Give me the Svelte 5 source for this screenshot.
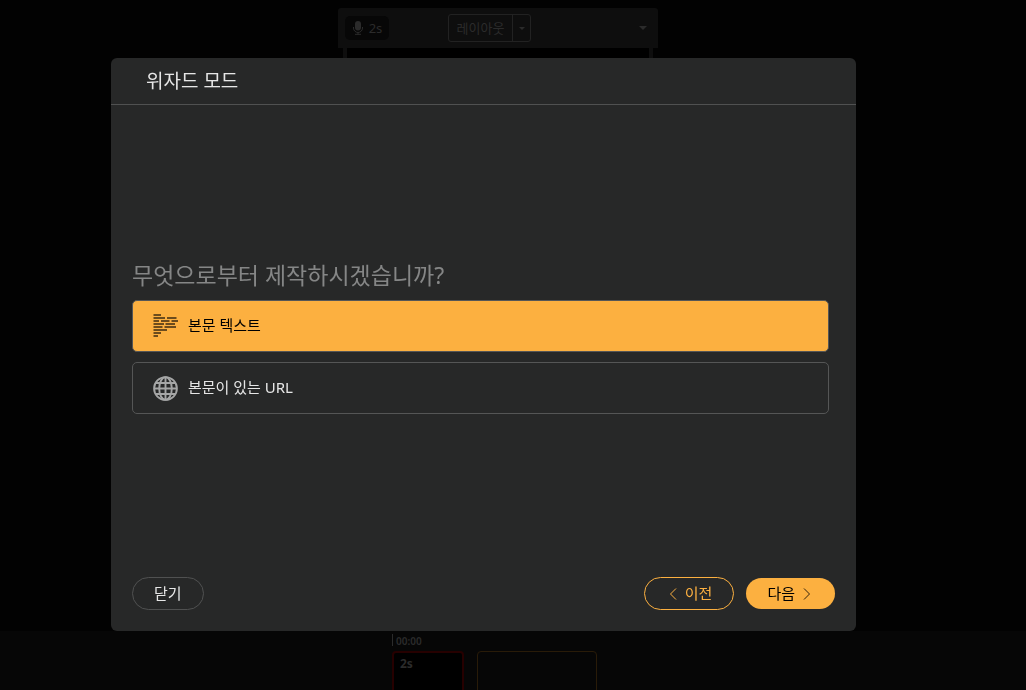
<script>
  let selected = $state('text');
</script>

<div class="page">
  <header class="toolbar">
    <button class="voice">
      <svg width="12" height="14" viewBox="0 0 12 14" aria-hidden="true">
        <rect x="3" y="0" width="6" height="9.500" rx="3" fill="currentColor" />
        <path d="M1.5 6v1a4.5 4.5 0 0 0 9 0V6M6 11.500v2M3 13.300h6" fill="none" stroke="currentColor" />
      </svg>
      <span>2s</span>
    </button>
    <div class="layout-group">
      <button class="layout">레이아웃</button>
      <button class="layout-more" aria-label="레이아웃">
        <svg width="6" height="3" viewBox="0 0 6 3" aria-hidden="true"><path d="M0 0h6L3 3z" fill="currentColor" /></svg>
      </button>
    </div>
    <button class="more" aria-label="2s">
      <svg width="8" height="4" viewBox="0 0 8 4" aria-hidden="true"><path d="M0 0h8L4 4z" fill="currentColor" /></svg>
    </button>
  </header>
  <div class="canvas"></div>
  <section class="timeline">
    <div class="time">00:00</div>
    <div class="clips">
      <div class="clip current">2s</div>
      <div class="clip next"></div>
    </div>
  </section>
</div>

<div class="overlay">
  <div class="dialog" role="dialog" aria-labelledby="title">
    <h1 id="title">위자드 모드</h1>
    <main>
      <h2>무엇으로부터 제작하시겠습니까?</h2>
      <button class="option" class:selected={selected === 'text'} onclick={() => (selected = 'text')}>
        <svg width="25" height="24" viewBox="0 0 25 24" aria-hidden="true">
          <path
            d="M.5 1h7.500M.5 4h11.500M14 4h9.500M.5 7h5.500M8 7h8.500M18.500 7h6.500M.5 10h10.500M12.500 10h9.500M.5 13h9M11.500 13h11.500M.5 16h13.500M.5 19h7.500M.5 22h4.500"
            fill="none" stroke="currentColor" stroke-width="1.300" />
        </svg>
        <span>본문 텍스트</span>
      </button>
      <button class="option" class:selected={selected === 'url'} onclick={() => (selected = 'url')}>
        <svg class="globe" width="25" height="25" viewBox="0 0 25 25" aria-hidden="true">
          <g fill="none" stroke="currentColor" stroke-width="1.900">
            <circle cx="12.500" cy="12.500" r="11.400" />
            <ellipse cx="12.500" cy="12.500" rx="6.300" ry="11.400" />
            <path d="M12.500 1v23M1 12.500h23M2.800 7h19.400M2.800 18h19.400" />
          </g>
        </svg>
        <span>본문이 있는 URL</span>
      </button>
    </main>
    <footer>
      <button class="pill close"><span>닫기</span></button>
      <button class="pill prev">
        <svg width="8" height="12" viewBox="0 0 8 12" aria-hidden="true"><path d="M7 .5 1.500 6 7 11.500" fill="none" stroke="currentColor" /></svg>
        <span>이전</span>
      </button>
      <button class="pill following">
        <span>다음</span>
        <svg width="8" height="12" viewBox="0 0 8 12" aria-hidden="true"><path d="M1 .5 6.500 6 1 11.500" fill="none" stroke="currentColor" stroke-opacity=".8" /></svg>
      </button>
    </footer>
  </div>
</div>

<style>
  :global(body) {
    margin: 0;
    background: #020202;
    font-family: 'Noto Sans', 'Noto Sans CJK KR', sans-serif;
  }

  button {
    margin: 0;
    padding: 0;
    border: 0;
    background: none;
    color: inherit;
    font: inherit;
    cursor: pointer;
  }

  svg {
    flex: none;
    display: block;
  }

  .page {
    box-sizing: border-box;
    height: 100vh;
    padding-top: 8px;
    display: flex;
    flex-direction: column;
    overflow: hidden;
    color: #2b2b2b;
    font-size: 13px;
  }

  .toolbar {
    box-sizing: border-box;
    width: 320px;
    height: 40px;
    padding: 0 11px 0 7px;
    margin-left: 338px;
    display: grid;
    grid-template-columns: 103px auto 1fr;
    align-items: center;
    flex: none;
    background: #0e0e0e;
    border-radius: 3px 3px 0 0;
  }

  .voice {
    width: 44px;
    height: 24px;
    display: flex;
    align-items: center;
    justify-content: center;
    gap: 5px;
    border-radius: 5px;
    background: #070707;
  }

  .layout-group {
    box-sizing: border-box;
    height: 28px;
    display: flex;
    border: 1px solid #222;
    border-radius: 3px;
  }

  .layout {
    width: 64px;
    line-height: 24px;
    border-right: 1px solid #222;
  }

  .layout-more {
    width: 17px;
    display: grid;
    place-items: center;
  }

  .more {
    justify-self: end;
  }

  .canvas {
    box-sizing: border-box;
    width: 310px;
    margin-left: 343px;
    flex: 1;
    border: solid #0e0e0e;
    border-width: 0 4px;
    background: #000;
  }

  .timeline {
    display: flow-root;
    height: 59px;
    padding-left: 392px;
    flex: none;
    background: #060606;
  }

  .time {
    height: 12px;
    margin: 3px 0 5px;
    padding-left: 3px;
    border-left: 1px solid #2b2b2b;
    font-size: 10px;
    font-weight: 600;
    line-height: 14px;
  }

  .clips {
    display: flex;
    gap: 13px;
  }

  .clip {
    box-sizing: border-box;
    height: 70px;
    border-radius: 4px;
  }

  .current {
    width: 72px;
    padding: 2px 6px;
    border: 2px solid #260000;
    background: #000;
    font-size: 12px;
    font-weight: 700;
    line-height: 18px;
  }

  .next {
    width: 120px;
    border: 1px solid #291b08;
  }

  .overlay {
    position: fixed;
    inset: 0;
    padding: 58px 170px 59px 111px;
    display: grid;
  }

  .dialog {
    display: flex;
    flex-direction: column;
    overflow: hidden;
    border-radius: 6px;
    background: #272828;
    color: #e6e6e6;
    font-size: 15px;
  }

  h1 {
    margin: 0;
    padding: 0 35px;
    border-bottom: 1px solid #505151;
    font-size: 19px;
    font-weight: 400;
    line-height: 46px;
  }

  main {
    padding: 0 27px 8px 21px;
    flex: 1;
    display: flex;
    flex-direction: column;
    justify-content: center;
    gap: 10px;
  }

  h2 {
    margin: 0;
    color: #858686;
    font-size: 23px;
    font-weight: 400;
    line-height: 30px;
  }

  .option {
    box-sizing: border-box;
    height: 52px;
    padding: 0 20px;
    display: flex;
    align-items: center;
    gap: 10px;
    border: 1px solid #555656;
    border-radius: 5px;
    text-align: left;
  }

  .option span,
  .pill span {
    padding-bottom: 2px;
    line-height: 20px;
  }

  .selected {
    background: #fcb040;
    color: #000;
  }

  .selected svg {
    color: #3d2b12;
  }

  .globe {
    color: #a5a6a6;
  }

  footer {
    padding: 0 21px 21px;
    display: flex;
    align-items: center;
    gap: 12px;
  }

  .pill {
    box-sizing: border-box;
    height: 33px;
    padding: 0 21px;
    display: flex;
    align-items: center;
    gap: 8px;
    border-radius: 17px;
  }

  .close {
    margin-right: auto;
    border: 1px solid #505151;
  }

  .prev {
    padding-left: 24px;
    border: 1px solid #fcb040;
    color: #fcb040;
  }

  .following {
    height: 31px;
    padding-right: 24px;
    background: #fcb040;
    color: #000;
  }
</style>
